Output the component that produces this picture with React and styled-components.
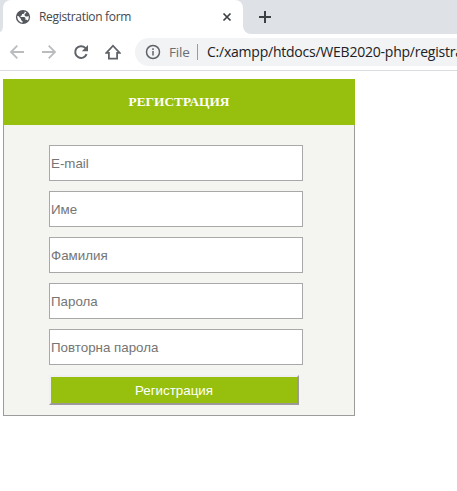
import React from 'react';
import styled, { createGlobalStyle } from 'styled-components';

const GlobalStyle = createGlobalStyle`
  * { box-sizing: border-box; }
  body { margin: 0; background: #fff; overflow: hidden; }
`;

const Browser = styled.div`
  width: 100%;
  height: 491px;
  overflow: hidden;
  background: #fff;
`;

const TabStrip = styled.div`
  display: flex;
  height: 34px;
  background: #dee1e6;
`;

const TabFlare = styled.div`
  width: 3px;
  background: #fff;
`;

const FlareFill = styled.div`
  height: 32px;
  background: #dee1e6;
  border-radius: 0 0 3px 0 / 0 0 6px 0;
`;

const Tab = styled.div`
  display: flex;
  align-items: center;
  width: 240px;
  height: 34px;
  padding: 0 10px 0 12px;
  background: #fff;
  border-radius: 8px 8px 0 0;
`;

const TabTitle = styled.span`
  flex: 1;
  margin-left: 8px;
  font: 12px/16px 'Open Sans', sans-serif;
  letter-spacing: -0.32px;
  color: #45484c;
  white-space: nowrap;
`;

const NewTabWrap = styled.div`
  flex: 1;
  display: flex;
  background: #fff;
`;

const NewTab = styled.div`
  flex: 1;
  display: flex;
  align-items: center;
  padding-left: 8px;
  background: #dee1e6;
  border-radius: 0 0 0 8px;
`;

const Toolbar = styled.div`
  display: flex;
  align-items: center;
  height: 37px;
  padding-left: 9px;
  border-bottom: 1px solid #dadce0;
`;

const NavIcons = styled.div`
  display: flex;
  flex-shrink: 0;
  gap: 16px;
  width: 126px;
`;

const AddressBar = styled.div`
  flex: 1;
  min-width: 0;
  display: flex;
  align-items: center;
  height: 28px;
  padding-left: 10px;
  overflow: hidden;
  background: #f1f3f4;
  border-radius: 14px 0 0 14px;
  font: 14px/20px 'Open Sans', sans-serif;
  white-space: nowrap;
`;

const Scheme = styled.span`
  flex-shrink: 0;
  width: 28px;
  margin-left: 8px;
  font-size: 13.5px;
  letter-spacing: -0.2px;
  color: #6a6e73;
`;

const Separator = styled.span`
  flex-shrink: 0;
  width: 1px;
  height: 16px;
  margin-right: 9px;
  background: #999c9f;
`;

const Address = styled.span`
  flex-shrink: 0;
  letter-spacing: -0.23px;
  color: #202124;
`;

const Card = styled.section`
  width: 352px;
  height: 337px;
  margin: 8px 0 0 3px;
`;

const CardHeader = styled.header`
  height: 46px;
  background: #97bf0d;
  color: #fff;
  font: bold 13.333px/46px 'Liberation Serif', serif;
  text-align: center;
`;

const Form = styled.form`
  display: flex;
  flex-direction: column;
  gap: 10px;
  height: 291px;
  padding: 20px 0 0 45px;
  background: #f4f4f0;
  border: 1px solid #9d9b9b;
  border-top: 0;
`;

const Field = styled.input`
  display: block;
  width: 254px;
  height: 36px;
  padding: 1px;
  background: #fff;
  border: 1px solid #a9a9a9;
  border-radius: 0;
  outline: 0;
  font: 13.333px 'Liberation Sans', sans-serif;
  &::placeholder { color: #757575; opacity: 1; }
`;

const Submit = styled.button`
  width: 250px;
  height: 30px;
  padding: 0;
  background: #97bf0d;
  border: 2px solid;
  border-color: #f0f0f2 #9d9999 #9d9999 #f0f0f2;
  border-radius: 0;
  color: #fff;
  font: 13.333px 'Liberation Sans', sans-serif;
`;

const Glyph = styled.svg`
  flex-shrink: 0;
  fill: none;
`;

const Icon = ({ size = 16, stroke, width = 2, children }) => (
  <Glyph width={size} height={size} viewBox={`0 0 ${size} ${size}`} stroke={stroke} strokeWidth={width}>
    {children}
  </Glyph>
);

const fields = ['E-mail', 'Име', 'Фамилия', 'Парола', 'Повторна парола'];

export default function App() {
  return (
    <Browser>
      <GlobalStyle />
      <TabStrip>
        <TabFlare><FlareFill /></TabFlare>
        <Tab>
          <Icon>
            <circle cx="8" cy="8" r="7.1" fill="#54585d" />
            <path fill="#fff" d="M9.600 2.500V3.800L8.400 5H7V6.300L5.600 6.900V8H9.400L10.400 9V10.800H11.800L12.600 11.600C13.700 10.300 14 8.600 13.600 7L12.300 7.600H10.800L9.600 6.400V5.300L11.500 3.600C11 3.100 10.300 2.700 9.600 2.500ZM2.300 7C2 10.300 4.200 13.200 7.500 13.700V12.300L6 11V9.900L3.400 7Z" />
          </Icon>
          <TabTitle>Registration form</TabTitle>
          <Icon size={12} stroke="#3c4043" width={1.7}>
            <path d="m2.500 2.500 7 7m0-7-7 7" />
          </Icon>
        </Tab>
        <NewTabWrap>
          <NewTab>
            <Icon size={28} stroke="#3c4043"><path d="M14 8v12M8 14h12" /></Icon>
          </NewTab>
        </NewTabWrap>
      </TabStrip>
      <Toolbar>
        <NavIcons>
          <Icon stroke="#babcbe" width={1.8}><path d="M15 8H2.500M8.300 1.700 2 8 8.300 14.300" /></Icon>
          <Icon stroke="#babcbe" width={1.8}><path d="M1 8h12.500M7.700 1.700 14 8 7.700 14.300" /></Icon>
          <Icon stroke="#5f6368">
            <path d="M13.600 10.200A5.900 5.900 0 1 1 12.300 3.900L13 4.700" />
            <path fill="#5f6368" stroke="none" d="M15 1v6.200H8.800Z" />
          </Icon>
          <Icon stroke="#5f6368" width={1.8}><path d="M1.300 8.900H3.900V14.600H12.100V8.900H14.700L8 1.700Z" /></Icon>
        </NavIcons>
        <AddressBar>
          <Icon stroke="#5f6368" width={1.5}>
            <circle cx="8" cy="8" r="6.500" />
            <path d="M8 7v4.500M8 4.300v1.600" />
          </Icon>
          <Scheme>File</Scheme>
          <Separator />
          <Address>C:/xampp/htdocs/WEB2020-php/registra</Address>
        </AddressBar>
      </Toolbar>
      <Card>
        <CardHeader>РЕГИСТРАЦИЯ</CardHeader>
        <Form onSubmit={(e) => e.preventDefault()}>
          {fields.map((label) => (
            <Field key={label} placeholder={label} aria-label={label} />
          ))}
          <Submit type="submit">Регистрация</Submit>
        </Form>
      </Card>
    </Browser>
  );
}
